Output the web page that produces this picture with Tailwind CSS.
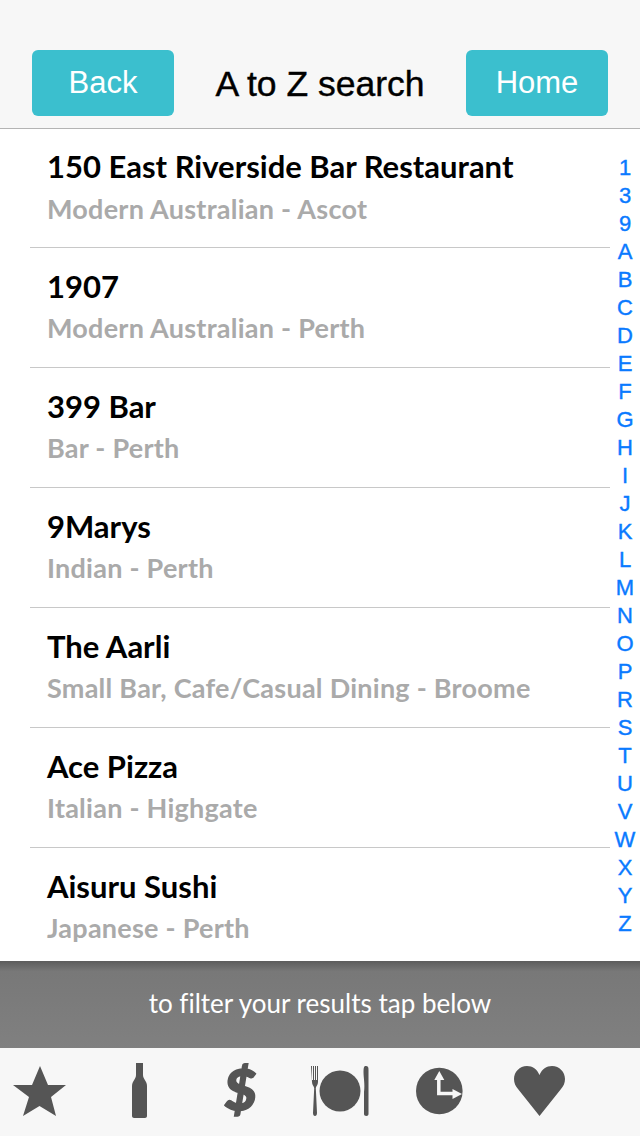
<!DOCTYPE html>
<html lang="en">
<head>
  <meta charset="UTF-8">
  <title>A to Z search</title>
  <script src="https://cdn.jsdelivr.net/npm/@tailwindcss/browser@4"></script>
</head>
<body class="bg-white">
<div class="w-[640px] h-[1136px] overflow-hidden flex flex-col font-['Lato',sans-serif]">

  <!-- header -->
  <header class="h-[129px] shrink-0 bg-[#f7f7f7] border-b border-[#b4b4b4] flex items-start justify-between pt-[50px] px-[32px] font-['Liberation_Sans',sans-serif]">
    <div class="w-[142px] h-[66px] rounded-[6px] bg-[#3bbfce] text-white text-[31px] flex items-center justify-center">Back</div>
    <h1 class="text-[35.500px] leading-[68px] text-black [-webkit-text-stroke:0.4px_black]">A to Z search</h1>
    <div class="w-[142px] h-[66px] rounded-[6px] bg-[#3bbfce] text-white text-[31px] flex items-center justify-center">Home</div>
  </header>

  <!-- list + index -->
  <main class="relative h-[832px] shrink-0 overflow-hidden">
    <ul class="ml-[30px] w-[580px]">
      <li class="h-[100px] box-content border-b border-[#c8c8c8] pl-[17px] pt-[18px]">
        <p class="text-[31px] leading-[39px] font-bold text-black">150 East Riverside Bar Restaurant</p>
        <p class="text-[27px] leading-[45px] font-bold tracking-[0.25px] text-[#aaaaaa]">Modern Australian - Ascot</p>
      </li>
      <li class="h-[100px] box-content border-b border-[#c8c8c8] pl-[17px] pt-[19px]">
        <p class="text-[31px] leading-[39px] font-bold text-black">1907</p>
        <p class="-mt-px text-[27px] leading-[45px] font-bold tracking-[0.25px] text-[#aaaaaa]">Modern Australian - Perth</p>
      </li>
      <li class="h-[100px] box-content border-b border-[#c8c8c8] pl-[17px] pt-[19px]">
        <p class="text-[31px] leading-[39px] font-bold text-black">399 Bar</p>
        <p class="-mt-px text-[27px] leading-[45px] font-bold tracking-[0.25px] text-[#aaaaaa]">Bar - Perth</p>
      </li>
      <li class="h-[100px] box-content border-b border-[#c8c8c8] pl-[17px] pt-[19px]">
        <p class="text-[31px] leading-[39px] font-bold text-black">9Marys</p>
        <p class="-mt-px text-[27px] leading-[45px] font-bold tracking-[0.25px] text-[#aaaaaa]">Indian - Perth</p>
      </li>
      <li class="h-[100px] box-content border-b border-[#c8c8c8] pl-[17px] pt-[19px]">
        <p class="text-[31px] leading-[39px] font-bold text-black">The Aarli</p>
        <p class="-mt-px text-[27px] leading-[45px] font-bold tracking-[0.25px] text-[#aaaaaa]">Small Bar, Cafe/Casual Dining - Broome</p>
      </li>
      <li class="h-[100px] box-content border-b border-[#c8c8c8] pl-[17px] pt-[19px]">
        <p class="text-[31px] leading-[39px] font-bold text-black">Ace Pizza</p>
        <p class="-mt-px text-[27px] leading-[45px] font-bold tracking-[0.25px] text-[#aaaaaa]">Italian - Highgate</p>
      </li>
      <li class="h-[100px] box-content pl-[17px] pt-[19px]">
        <p class="text-[31px] leading-[39px] font-bold text-black">Aisuru Sushi</p>
        <p class="-mt-px text-[27px] leading-[45px] font-bold tracking-[0.25px] text-[#aaaaaa]">Japanese - Perth</p>
      </li>
    </ul>
    <div class="absolute right-0 top-[25px] w-[30px] flex flex-col items-center text-[#0a7aff] text-[22px] leading-[28px] [-webkit-text-stroke:0.4px_#0a7aff] font-['Liberation_Sans',sans-serif]">
      <span>1</span><span>3</span><span>9</span><span>A</span><span>B</span><span>C</span><span>D</span><span>E</span><span>F</span><span>G</span><span>H</span><span>I</span><span>J</span><span>K</span><span>L</span><span>M</span><span>N</span><span>O</span><span>P</span><span>R</span><span>S</span><span>T</span><span>U</span><span>V</span><span>W</span><span>X</span><span>Y</span><span>Z</span>
    </div>
  </main>

  <!-- filter banner -->
  <div class="h-[87px] shrink-0 flex items-center justify-center pb-[2px] text-white text-[26px] [font-variant-ligatures:none] bg-gradient-to-b from-[#5c5c5c] from-0% via-[#787878] via-[12%] to-[#808080]">to filter your results tap below</div>

  <!-- filter icons -->
  <nav class="relative flex-1 bg-[#f7f7f7]">
    <svg class="absolute left-0 top-0" width="640" height="88" viewBox="0 0 640 88" fill="#555555">
      <!-- star -->
      <polygon points="40,18 48,37 66,37 51,49 56,68 39.500,58 23,68 29,49 13,37 32,37"/>
      <!-- bottle -->
      <path d="M136 15h7v12c0 4 4 6 4 11v30c0 1-1 2-2 2h-11c-1 0-2-1-2-2V38c0-5 4-7 4-11z"/>
      <!-- dollar -->
      <text x="240" y="62" text-anchor="middle" font-family="Lato" font-weight="900" font-size="56" stroke="#555555" stroke-width="1.500" transform="skewX(-4) translate(3.500 0)">$</text>
      <!-- fork, plate, knife -->
      <path d="M311 18h1v14h1V18h1v14h1V18h1v14h1V18h1v16c0 3-2 4-2.200 6l1.200 25c0 2-.800 3-2 3s-2-1-2-3l1.200-25c-.200-2-2.200-3-2.200-6z"/>
      <circle cx="340" cy="43" r="20.500"/>
      <path d="M366 18c2 0 2.500 1 2.500 4v44c0 1-.800 2-2.200 2s-2.300-1-2.300-2V44c1-8-.500-14-.500-20s1-6 3-6z"/>
      <!-- clock -->
      <circle cx="439.300" cy="43" r="23.300"/>
      <path d="M438.800 28V45.500H455" fill="none" stroke="#f7f7f7" stroke-width="3.500"/>
      <path d="M439.300 23l-5 9h10zM462 46l-9.500-5v10z" fill="#f7f7f7"/>
      <!-- heart -->
      <path d="M539.500 68L518 41c-2.500-3-4-6-4-10 0-7 5.500-13 13-13 5.500 0 10 3 12.500 9 2.500-6 7-9 12.500-9 7.500 0 13 6 13 13 0 4-1.500 7-4 10z"/>
    </svg>
  </nav>
</div>
</body>
</html>
